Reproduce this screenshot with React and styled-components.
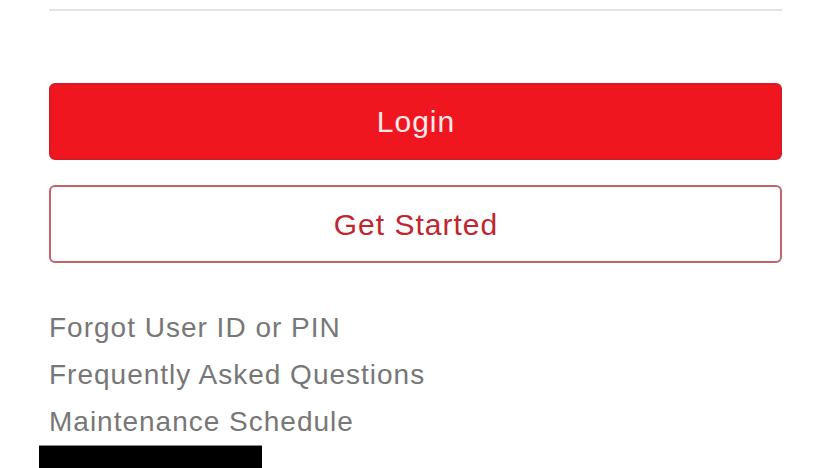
import React from 'react'
import styled, { createGlobalStyle } from 'styled-components'

const GlobalStyle = createGlobalStyle`
	html, body {
		margin: 0;
		padding: 0;
		background: #ffffff;
	}
	body {
		font-family: "Liberation Sans", Arial, Helvetica, sans-serif;
		overflow: hidden;
	}
`

const Screen = styled.div`
	width: 830px;
	height: 468px;
	box-sizing: border-box;
	padding: 9px 48px 0 49px;
	display: flex;
	flex-direction: column;
	overflow: hidden;
`
const Divider = styled.div`
	height: 2px;
	background: #e4e4e4;
	margin-bottom: 72px;
`
const Actions = styled.div`
	display: flex;
	flex-direction: column;
	gap: 25px;
`
const Button = styled.button`
	height: ${props => props.$primary ? '77px' : '78px'};
	box-sizing: border-box;
	border-radius: 6px;
	border: 2px solid ${props => props.$primary ? '#d81a22' : '#c2636b'};
	background: ${props => props.$primary ? '#ef1620' : '#ffffff'};
	color: ${props => props.$primary ? '#fbe9ea' : '#c0262e'};
	font-family: "Liberation Sans", Arial, sans-serif;
	font-size: 30px;
	letter-spacing: 1px;
	padding: 2px 0 0 1px;
	cursor: pointer;
`
const Links = styled.nav`
	display: flex;
	flex-direction: column;
	margin-top: 41px;
`
const Link = styled.a`
	font-size: 28px;
	line-height: 47px;
	letter-spacing: 1px;
	color: #777777;
	text-decoration: none;
`
const Redacted = styled.div`
	width: 223px;
	height: 30px;
	margin-left: -10px;
	background: #000000;
	border-top: 1px solid #8a8a8a;
`

export default function App() {
	return (
		<>
			<GlobalStyle />
			<Screen>
				<Divider />
				<Actions>
					<Button $primary>Login</Button>
					<Button>Get Started</Button>
				</Actions>
				<Links>
					<Link href="#">Forgot User ID or PIN</Link>
					<Link href="#">Frequently Asked Questions</Link>
					<Link href="#">Maintenance Schedule</Link>
				</Links>
				<Redacted />
			</Screen>
		</>
	)
}
